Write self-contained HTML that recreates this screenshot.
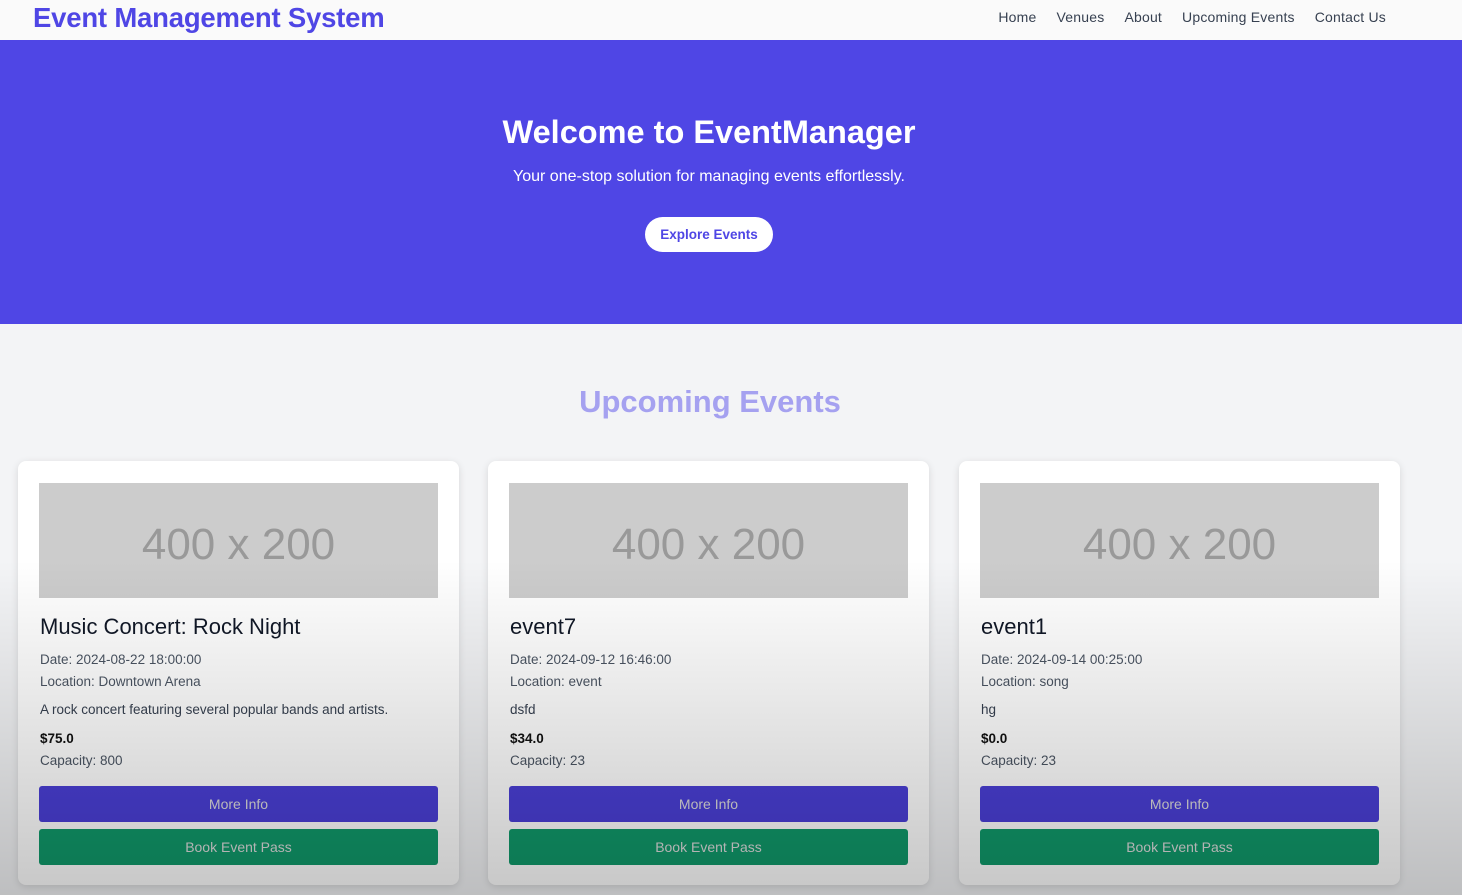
<!DOCTYPE html>
<html><head><meta charset="utf-8"><style>
*{margin:0;padding:0;box-sizing:border-box}
body{width:1462px;height:895px;overflow:hidden;background:#f3f4f6;font-family:"Liberation Sans",sans-serif;position:relative}
.nav{height:40px;background:#fafafa;position:relative}
.logo{position:absolute;left:33px;top:2px;font-size:27.5px;font-weight:bold;color:#4f46e5;letter-spacing:-0.2px}
.links{position:absolute;top:9px;right:76px;font-size:14px;color:#374151;letter-spacing:0.2px}
.links span{margin-left:20px}
.hero{height:284px;background:#4f46e5;text-align:center;color:#fff}
.hero .in{width:1418px}
.hero h1{padding-top:74px;font-size:32.5px;font-weight:bold}
.hero p{margin-top:17px;font-size:16px}
.btn{display:inline-block;margin-top:31px;background:#fff;color:#4f46e5;border-radius:18px;padding:10px 15px;font-size:13.5px;font-weight:bold}
h2{position:absolute;top:384px;width:1420px;text-align:center;font-size:31px;color:#a5a1f0;font-weight:bold}
.card{position:absolute;top:461px;width:441px;height:424px;background:#fff;border-radius:8px;box-shadow:0 2px 8px rgba(0,0,0,.12);padding:22px 21px}
.img{height:115px;background:#ccc;color:#999;font-size:44px;text-align:center;line-height:124px}
.tx{padding-left:1px}
.t{margin-top:16px;font-size:22px;color:#111827;line-height:26px}
.s{font-size:13.5px;color:#4b5563;margin-top:9px;line-height:22px}
.s2{font-size:13.5px;color:#4b5563;line-height:22px}
.d{font-size:13.5px;color:#374151;margin-top:6px;line-height:22px}
.p{font-size:13.5px;font-weight:bold;color:#111;margin-top:7px;line-height:22px}
.b{height:36px;border-radius:3px;color:#ddd;font-size:14px;text-align:center;line-height:36px}
.b1{background:#4a3fd6;margin-top:14px}.b2{background:#10996a;margin-top:7px}
.ov{position:absolute;left:0;top:0;width:1462px;height:895px;pointer-events:none;background:linear-gradient(to bottom,rgba(0,0,0,0) 560px,rgba(0,0,0,.22) 895px)}
</style></head><body>
<div class="nav"><div class="logo">Event Management System</div><div class="links"><span>Home</span><span>Venues</span><span>About</span><span>Upcoming Events</span><span>Contact Us</span></div></div>
<div class="hero"><div class="in"><h1>Welcome to EventManager</h1><p>Your one-stop solution for managing events effortlessly.</p><div class="btn">Explore Events</div></div></div>
<h2>Upcoming Events</h2>
<div class="card" style="left:18px"><div class="img">400 x 200</div><div class="tx"><div class="t">Music Concert: Rock Night</div><div class="s">Date: 2024-08-22 18:00:00</div><div class="s2">Location: Downtown Arena</div><div class="d">A rock concert featuring several popular bands and artists.</div><div class="p">$75.0</div><div class="s2">Capacity: 800</div></div><div class="b b1">More Info</div><div class="b b2">Book Event Pass</div></div>
<div class="card" style="left:488px"><div class="img">400 x 200</div><div class="tx"><div class="t">event7</div><div class="s">Date: 2024-09-12 16:46:00</div><div class="s2">Location: event</div><div class="d">dsfd</div><div class="p">$34.0</div><div class="s2">Capacity: 23</div></div><div class="b b1">More Info</div><div class="b b2">Book Event Pass</div></div>
<div class="card" style="left:959px"><div class="img">400 x 200</div><div class="tx"><div class="t">event1</div><div class="s">Date: 2024-09-14 00:25:00</div><div class="s2">Location: song</div><div class="d">hg</div><div class="p">$0.0</div><div class="s2">Capacity: 23</div></div><div class="b b1">More Info</div><div class="b b2">Book Event Pass</div></div>
<div class="ov"></div>
</body></html>
